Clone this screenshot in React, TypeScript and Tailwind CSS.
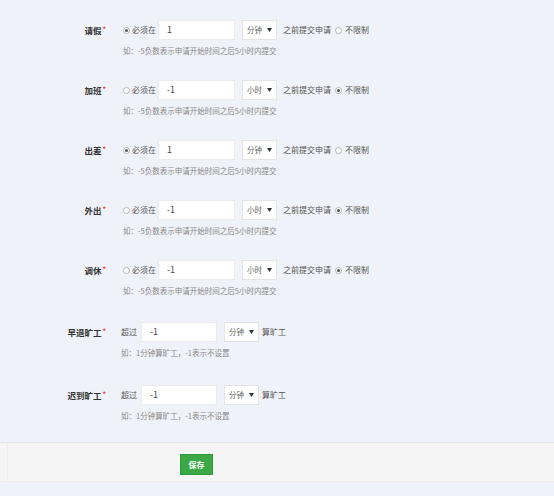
import React from "react";

const font = { fontFamily: '"Noto Sans CJK SC", "Noto Sans", sans-serif' };

function Radio({ checked }: { checked: boolean }) {
  return (
    <span className="inline-flex items-center justify-center w-[7px] h-[7px] rounded-full border border-[#b5b5b5] bg-white shrink-0">
      {checked && <span className="block w-[3px] h-[3px] rounded-full bg-[#555]" />}
    </span>
  );
}

function Select({ text }: { text: string }) {
  return (
    <div className="flex items-center justify-between w-[35px] h-[20px] bg-white border border-[#e4e4e4] pl-[4px] pr-[4px] text-[7.5px] text-[#666] shrink-0">
      <span>{text}</span>
      <svg width="5" height="4" viewBox="0 0 5 4">
        <path d="M0 0 L5 0 L2.5 4 Z" fill="#333" />
      </svg>
    </div>
  );
}

function Input({ value, w }: { value: string; w: string }) {
  return (
    <div className={`${w} h-[20px] bg-white border border-[#ececec] pl-[8px] flex items-center text-[9px] text-[#444] shrink-0`}>
      {value}
    </div>
  );
}

function Label({ text }: { text: string }) {
  return (
    <div className="w-[106px] shrink-0 text-right h-[20px] leading-[20px] text-[8.5px] font-bold text-[#333]">
      {text}
      <span className="text-[#e33] text-[7px] align-top relative top-[-1px] ml-[1px]">*</span>
    </div>
  );
}

function ApplyRow({
  label,
  must,
  value,
  unit,
  mb,
}: {
  label: string;
  must: boolean;
  value: string;
  unit: string;
  mb: string;
}) {
  return (
    <div className={`flex ${mb}`}>
      <Label text={label} />
      <div className="pl-[17px]">
        <div className="flex items-center h-[20px] text-[8px] text-[#555]">
          <Radio checked={must} />
          <span className="ml-[2px] mr-[2px]">必须在</span>
          <Input value={value} w="w-[77px]" />
          <span className="w-[7px]" />
          <Select text={unit} />
          <span className="ml-[6px] mr-[4px]">之前提交申请</span>
          <Radio checked={!must} />
          <span className="ml-[3px]">不限制</span>
        </div>
        <div className="mt-[4px] text-[7.5px] leading-[14px] text-[#888]">
          如：-5负数表示申请开始时间之后5小时内提交
        </div>
      </div>
    </div>
  );
}

function AbsentRow({ label, mb }: { label: string; mb: string }) {
  return (
    <div className={`flex ${mb}`}>
      <Label text={label} />
      <div className="pl-[15px]">
        <div className="flex items-center h-[20px] text-[8px] text-[#555]">
          <span className="mr-[4px]">超过</span>
          <Input value="-1" w="w-[76px]" />
          <span className="w-[7px]" />
          <Select text="分钟" />
          <span className="ml-[3px]">算旷工</span>
        </div>
        <div className="mt-[4px] text-[7.5px] leading-[14px] text-[#888]">
          如：1分钟算旷工，-1表示不设置
        </div>
      </div>
    </div>
  );
}

export default function App() {
  return (
    <div className="w-[554px] h-[496px] bg-[#f0f2f9] overflow-hidden" style={font}>
      <div className="pt-[20px]">
        <ApplyRow label="请假" must={true} value="1" unit="分钟" mb="mb-[22px]" />
        <ApplyRow label="加班" must={false} value="-1" unit="小时" mb="mb-[22px]" />
        <ApplyRow label="出差" must={true} value="1" unit="分钟" mb="mb-[22px]" />
        <ApplyRow label="外出" must={false} value="-1" unit="小时" mb="mb-[22px]" />
        <ApplyRow label="调休" must={false} value="-1" unit="小时" mb="mb-[24px]" />
        <AbsentRow label="早退旷工" mb="mb-[25px]" />
        <AbsentRow label="迟到旷工" mb="mb-[19px]" />
      </div>
      <div className="flex h-[40px] bg-[#f5f5f5] border-t border-[#e6e6e6] border-b border-b-[#eeeeee]">
        <div className="w-[8px] border-r border-[#ececec]" />
        <div className="pl-[172px] pt-[11px]">
          <button className="w-[33px] h-[21px] bg-[#39a845] border border-[#2f9a3c] text-white text-[8px] font-bold flex items-center justify-center">
            保存
          </button>
        </div>
      </div>
    </div>
  );
}
